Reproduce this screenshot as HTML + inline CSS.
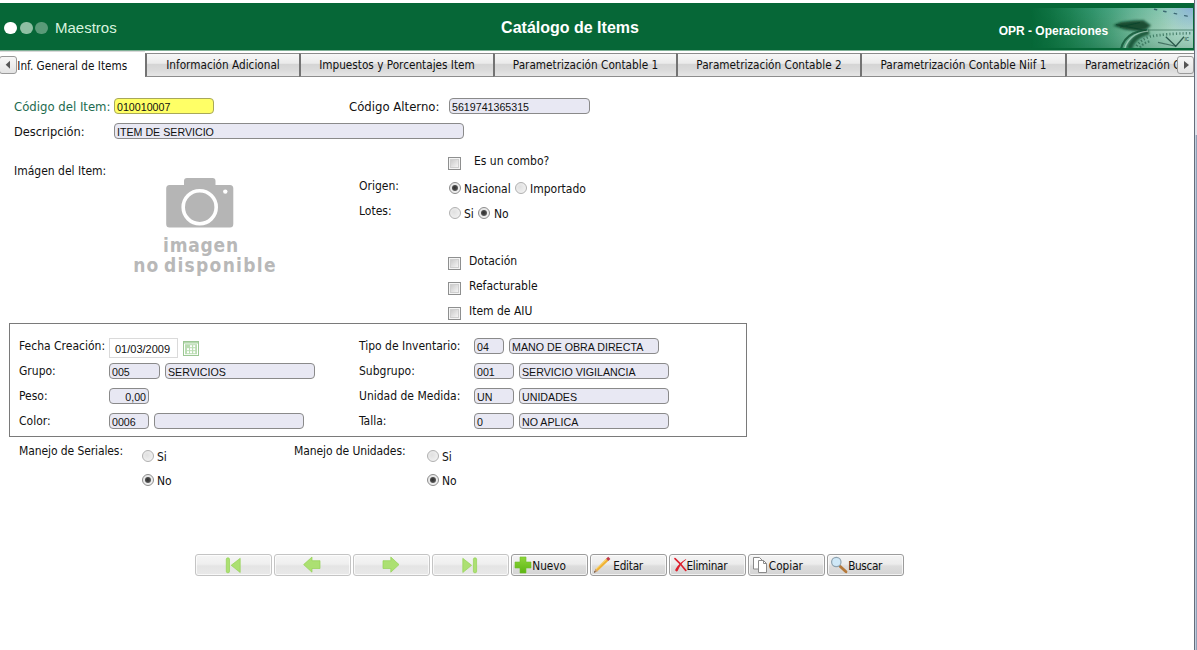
<!DOCTYPE html>
<html lang="es">
<head>
<meta charset="utf-8">
<title>Catálogo de Items</title>
<style>
html,body{margin:0;padding:0;background:#fff;}
body{width:1197px;height:650px;position:relative;overflow:hidden;font-stretch:condensed;font-family:"DejaVu Sans Condensed","DejaVu Sans","Liberation Sans",sans-serif;font-size:12px;color:#111;}
.abs{position:absolute;white-space:nowrap;}
#hdr{left:0;top:3px;width:1194px;height:47px;background:#066737;overflow:hidden;}
#hdr .ttl{left:0;width:1140px;top:16px;text-align:center;font:bold 16px "Liberation Sans",sans-serif;color:#fff;}
#hdr .mae{left:55px;top:16px;font:15px "Liberation Sans",sans-serif;color:#d8f3df;}
#hdr .opr{left:998.7px;top:21px;font:bold 12px "Liberation Sans",sans-serif;color:#fff;}
.dot{position:absolute;width:12.6px;height:12.6px;border-radius:50%;top:18.6px;}
.lbl{position:absolute;white-space:nowrap;font-size:12px;line-height:14px;color:#111;}
.in{position:absolute;box-sizing:border-box;height:16px;border:1px solid #8a8a8a;border-radius:4px;background:#e8e8f3;font:10.67px/16px "Liberation Sans",sans-serif;color:#111;padding:0 0 0 2px;white-space:nowrap;overflow:hidden;}
.cb{position:absolute;box-sizing:border-box;width:13px;height:13px;border:1px solid #8e8f8f;background:#f4f4f4;box-shadow:inset 0 0 0 1px #f4f4f4, inset 0 0 0 2px #cfcfcf;}
.cb:after{content:"";position:absolute;left:2px;top:2px;right:2px;bottom:2px;background:linear-gradient(135deg,#cbcbcb,#f4f4f4);}
.rd{position:absolute;box-sizing:border-box;width:12px;height:12px;border:1px solid #b0b0b0;border-radius:50%;background:radial-gradient(circle at 40% 40%,#e0e0e0 0,#ececec 55%,#f6f6f6 100%);}
.rd.on{border-color:#8c8c8c;}
.rd.on:after{content:"";position:absolute;left:2px;top:2px;width:6px;height:6px;border-radius:50%;background:radial-gradient(circle at 45% 45%,#2e2e2e 0,#4a4a4a 50%,#8a8a8a 100%);}
.tab{position:absolute;box-sizing:border-box;top:53px;height:24px;border:1px solid #8c8c8c;border-left:2px solid #737373;border-right:none;background:linear-gradient(#f7f7f7 0,#ebebeb 42%,#d5d5d5 47%,#dbdbdb 75%,#e6e6e6 100%);font:11.7px/23px "DejaVu Sans Condensed","DejaVu Sans","Liberation Sans",sans-serif;color:#111;text-align:center;white-space:nowrap;overflow:hidden;}
.btn{position:absolute;box-sizing:border-box;top:554px;width:77px;height:22px;border:1px solid #9c9c9c;border-radius:3px;background:linear-gradient(#f4f4f4 0,#ececec 45%,#dddddd 55%,#d4d4d4 100%);box-shadow:inset 0 0 0 1px rgba(255,255,255,.7);font:11.7px/22px "DejaVu Sans Condensed","DejaVu Sans","Liberation Sans",sans-serif;color:#111;white-space:nowrap;overflow:hidden;}
.sc{width:17px;height:18px;box-sizing:border-box;border:1px solid #9a9a9a;border-radius:3px;background:linear-gradient(#f7f7f7,#e3e3e3);}
.sc svg{position:absolute;left:-1px;top:-1px}
.noimg{text-align:center;font:bold 19px/22px "DejaVu Sans Condensed","DejaVu Sans",sans-serif;letter-spacing:0.8px;word-spacing:3px;color:#b8b8b8;}
.btn svg{position:absolute;left:-1px;top:-1px;}
.btn.dis{border-color:#c4c4c4;background:linear-gradient(#f5f5f5 0,#efefef 45%,#e4e4e4 55%,#e9e9e9 100%);}
</style>
</head>
<body>
<!-- header -->
<div id="hdr" class="abs">
  <div class="dot" style="left:4px;background:#fff"></div>
  <div class="dot" style="left:20px;background:#8fbfa3"></div>
  <div class="dot" style="left:35px;background:#5a9a78"></div>
<svg class="abs" style="left:1030px;top:5px" width="164" height="40" viewBox="1030 8 164 40">
    <defs>
      <linearGradient id="hg" x1="1030" y1="0" x2="1194" y2="0" gradientUnits="userSpaceOnUse">
        <stop offset="0" stop-color="#066737"/>
        <stop offset="0.12" stop-color="#0c6f3e"/>
        <stop offset="0.25" stop-color="#1a7d4d"/>
        <stop offset="0.38" stop-color="#2e8d62"/>
        <stop offset="0.50" stop-color="#4a9f79"/>
        <stop offset="0.62" stop-color="#6db394"/>
        <stop offset="0.75" stop-color="#8dc5ac"/>
        <stop offset="0.88" stop-color="#a9d5c2"/>
        <stop offset="1" stop-color="#b2dacb"/>
      </linearGradient>
      <linearGradient id="hv" x1="0" y1="8" x2="0" y2="48" gradientUnits="userSpaceOnUse">
        <stop offset="0" stop-color="#3fb39a" stop-opacity="0.22"/>
        <stop offset="0.5" stop-color="#3fb39a" stop-opacity="0"/>
        <stop offset="1" stop-color="#064d2a" stop-opacity="0.18"/>
      </linearGradient>
      <radialGradient id="hb" cx="1192" cy="6" r="34" gradientUnits="userSpaceOnUse">
        <stop offset="0" stop-color="#86a9dc" stop-opacity="0.85"/>
        <stop offset="0.5" stop-color="#8fb8d8" stop-opacity="0.45"/>
        <stop offset="1" stop-color="#9cc8d0" stop-opacity="0"/>
      </radialGradient>
      <linearGradient id="hmg" x1="1030" y1="0" x2="1194" y2="0" gradientUnits="userSpaceOnUse"><stop offset="0" stop-color="#000"/><stop offset="0.45" stop-color="#fff"/><stop offset="1" stop-color="#fff"/></linearGradient>
      <mask id="hm" maskUnits="userSpaceOnUse" x="1030" y="8" width="164" height="40"><rect x="1030" y="8" width="164" height="40" fill="url(#hmg)"/></mask>
      <filter id="bl" x="-10%" y="-10%" width="120%" height="120%"><feGaussianBlur stdDeviation="0.6"/></filter>
      <filter id="bl2" x="-10%" y="-10%" width="120%" height="120%"><feGaussianBlur stdDeviation="0.9"/></filter>
    </defs>
    <rect x="1030" y="8" width="163" height="40" fill="url(#hg)"/>
    <rect x="1030" y="8" width="163" height="40" fill="url(#hv)" mask="url(#hm)"/>
    <rect x="1130" y="8" width="63" height="40" fill="url(#hb)"/>
    <g filter="url(#bl2)">
      <path d="M1113 25.5 L1121 22 L1134 20.6 L1143.6 20.3 L1151 25.6 L1146 29.5 L1138 31.2 L1125 29.4 Z" fill="#083f27" fill-opacity="0.88"/>
      <path d="M1129.3 49 Q1131.5 40.5 1139 36 Q1143 33.5 1149 32" fill="none" stroke="#0a4c2e" stroke-opacity="0.85" stroke-width="5.2"/>
    </g>
    <g filter="url(#bl)" fill="none">
      <path d="M1121 49 Q1123.5 38.5 1133 33.5 Q1139 30.6 1147 30.2" stroke="#0c5132" stroke-opacity="0.8" stroke-width="2"/>
      <path d="M1124.6 49 Q1127 40 1135 35 Q1140 32 1148 31.2" stroke="#cfe9dd" stroke-opacity="0.55" stroke-width="1.3"/>
      <path d="M1148 30 H1193" stroke="#1c5a44" stroke-opacity="0.6" stroke-width="1.1"/>
      <path d="M1136.5 46 Q1141 39.5 1150 36.6 Q1165 33.6 1192 33.2" stroke="#17523c" stroke-opacity="0.6" stroke-width="2.6" stroke-dasharray="1.2 2.1"/>
      <path d="M1140 47.5 Q1143 43 1150 41.2" stroke="#17523c" stroke-opacity="0.55" stroke-width="2.2" stroke-dasharray="1.5 1.8"/>
      <path d="M1165.8 36.8 L1175.8 46.2 L1184 36.8" stroke="#123f33" stroke-opacity="0.8" stroke-width="1.3"/>
      <path d="M1158 42.4 L1175.8 46.2" stroke="#123f33" stroke-opacity="0.6" stroke-width="1.1"/>
      <path d="M1154.5 9.2 l2.2 .5 M1163.6 11.2 l2.4 .5 M1174.2 13.4 l2.4 .5 M1184.6 15.6 l2.6 .5" stroke="#1f4a5a" stroke-opacity="0.75" stroke-width="1.4" stroke-linecap="round"/>
      <path d="M1116 24.5 L1146 30.5 M1120 27 L1140 22.5" stroke="#0a3f28" stroke-opacity="0.6" stroke-width="1.2"/>
    </g>
    <text x="1184.6" y="40.6" font-family="Liberation Sans, sans-serif" font-size="4.6" font-weight="bold" fill="#1a4a3c" fill-opacity="0.75">IC</text>
  </svg>
  <div class="abs mae">Maestros</div>
  <div class="abs ttl">Catálogo de Items</div>
  <div class="abs opr">OPR - Operaciones</div>
</div>

<div class="abs" style="left:0;top:50px;width:1194px;height:1px;background:#7fb096"></div>
<!-- tabs -->
<div class="abs" style="left:0;top:76px;width:1194px;height:1px;background:#8c8c8c"></div>
<div class="abs" id="tab0" style="left:0;top:51px;width:145px;height:27px;background:#fff;border-top:1px solid #d9d9d9;box-sizing:border-box;font:11.7px/24px 'DejaVu Sans Condensed','DejaVu Sans','Liberation Sans',sans-serif;"><span class="abs" style="left:17.3px;top:2px">Inf. General de Items</span></div>
<div class="tab" style="left:145px;width:154px">Información Adicional</div>
<div class="tab" style="left:299px;width:194px">Impuestos y Porcentajes Item</div>
<div class="tab" style="left:493px;width:183px">Parametrización Contable 1</div>
<div class="tab" style="left:676px;width:184px">Parametrización Contable 2</div>
<div class="tab" style="left:860px;width:205px">Parametrización Contable Niif 1</div>
<div class="tab" style="left:1065px;width:129px;text-align:left;padding-left:18px">Parametrización Contable Niif 2</div>
<div class="abs sc" style="left:-1px;top:56px;width:18px"><svg width="18" height="18" viewBox="-1 0 18 18"><path d="M5.7 8.8 L10 4.8 L10 12.8 Z" fill="#555"/></svg></div>
<div class="abs sc" style="left:1177px;top:56px"><svg width="17" height="18" viewBox="0 0 17 18"><path d="M12 9 L7 5 L7 13 Z" fill="#555"/></svg></div>

<!-- form top -->
<div class="lbl" style="left:14px;top:100px;font-size:13px;color:#1d6b4f">Código del Item:</div>
<div class="in" style="left:114px;top:98px;width:100px;background:#ffff66;border-color:#a8a85a">010010007</div>
<div class="lbl" style="left:349px;top:100px;font-size:13px">Código Alterno:</div>
<div class="in" style="left:449px;top:98px;width:141px">5619741365315</div>
<div class="lbl" style="left:14px;top:125px;font-size:12.7px">Descripción:</div>
<div class="in" style="left:114px;top:123px;width:350px">ITEM DE SERVICIO</div>
<div class="lbl" style="left:14px;top:164px">Imágen del Item:</div>

<div class="cb" style="left:448px;top:157px"></div>
<div class="lbl" style="left:474px;top:154px">Es un combo?</div>
<div class="lbl" style="left:359px;top:179px">Origen:</div>
<div class="rd on" style="left:449px;top:182px"></div>
<div class="lbl" style="left:464px;top:182px">Nacional</div>
<div class="rd" style="left:515px;top:182px"></div>
<div class="lbl" style="left:530px;top:182px">Importado</div>
<div class="lbl" style="left:359px;top:204px">Lotes:</div>
<div class="rd" style="left:449px;top:207px"></div>
<div class="lbl" style="left:464px;top:207px">Si</div>
<div class="rd on" style="left:478px;top:207px"></div>
<div class="lbl" style="left:494px;top:207px">No</div>

<div class="cb" style="left:448px;top:257px"></div>
<div class="lbl" style="left:469px;top:254px">Dotación</div>
<div class="cb" style="left:448px;top:282px"></div>
<div class="lbl" style="left:469px;top:279px">Refacturable</div>
<div class="cb" style="left:448px;top:307px"></div>
<div class="lbl" style="left:469px;top:304px">Item de AIU</div>


<!-- image placeholder -->
<svg class="abs" style="left:160px;top:174px" width="80" height="58" viewBox="160 174 80 58">
  <path d="M169.5 185 H184 V181 Q184 178 187 178 H212.5 Q215.5 178 215.5 181 V185 H230 Q233.3 185 233.3 188.5 V224 Q233.3 227.5 230 227.5 H169.5 Q166.2 227.5 166.2 224 V188.5 Q166.2 185 169.5 185 Z" fill="#b5b5b5"/>
  <circle cx="199.7" cy="207.2" r="16.5" fill="none" stroke="#fff" stroke-width="3.6"/>
  <circle cx="225.3" cy="191.6" r="2.2" fill="#fff"/>
</svg>
<div class="abs noimg" style="left:127px;top:234px;width:148px;">imagen</div>
<div class="abs noimg" style="left:131px;top:254px;width:148px;letter-spacing:1.3px;word-spacing:-3px">no disponible</div>
<!-- boxed section -->
<div class="abs" style="left:9px;top:323px;width:738px;height:114px;box-sizing:border-box;border:1px solid #7a7a7a"></div>
<div class="lbl" style="left:19px;top:339px">Fecha Creación:</div>
<div class="abs" style="left:109px;top:338px;width:69px;height:19.5px;box-sizing:border-box;border:1px solid #dadada;background:#fff;font:11px/20px 'Liberation Sans',sans-serif;padding-left:5px">01/03/2009</div>
<svg class="abs" style="left:183px;top:341px" width="16" height="15" viewBox="0 0 16 15"><rect x="0.5" y="0.5" width="15" height="14" fill="#fff" stroke="#9cc794"/><rect x="1" y="1" width="14" height="1.6" fill="#b4d8ad"/><rect x="2" y="3.2" width="12" height="10" fill="#b9dcb1"/><g fill="#fff"><rect x="7" y="4.2" width="2" height="2"/><rect x="10.2" y="4.2" width="2" height="2"/><rect x="4" y="7.2" width="2" height="2"/><rect x="7" y="7.2" width="2" height="2"/><rect x="10.2" y="7.2" width="2" height="2"/><rect x="4" y="10.2" width="2" height="2"/><rect x="7" y="10.2" width="2" height="2"/><rect x="10.2" y="10.2" width="2" height="2"/></g></svg>
<div class="lbl" style="left:19px;top:364px">Grupo:</div>
<div class="in" style="left:109px;top:363px;width:51px">005</div>
<div class="in" style="left:165px;top:363px;width:150px">SERVICIOS</div>
<div class="lbl" style="left:19px;top:389px">Peso:</div>
<div class="in" style="left:109px;top:388px;width:40px;text-align:right;padding-right:2px">0,00</div>
<div class="lbl" style="left:19px;top:414px">Color:</div>
<div class="in" style="left:109px;top:413px;width:40px">0006</div>
<div class="in" style="left:154px;top:413px;width:150px"></div>

<div class="lbl" style="left:359px;top:339px">Tipo de Inventario:</div>
<div class="in" style="left:474px;top:338px;width:30px">04</div>
<div class="in" style="left:509px;top:338px;width:150px">MANO DE OBRA DIRECTA</div>
<div class="lbl" style="left:359px;top:364px">Subgrupo:</div>
<div class="in" style="left:474px;top:363px;width:40px">001</div>
<div class="in" style="left:519px;top:363px;width:150px">SERVICIO VIGILANCIA</div>
<div class="lbl" style="left:359px;top:389px">Unidad de Medida:</div>
<div class="in" style="left:474px;top:388px;width:40px">UN</div>
<div class="in" style="left:519px;top:388px;width:150px">UNIDADES</div>
<div class="lbl" style="left:359px;top:414px">Talla:</div>
<div class="in" style="left:474px;top:413px;width:40px">0</div>
<div class="in" style="left:519px;top:413px;width:150px">NO APLICA</div>

<!-- below box -->
<div class="lbl" style="left:19px;top:444px;letter-spacing:-0.1px">Manejo de Seriales:</div>
<div class="rd" style="left:142px;top:450px"></div>
<div class="lbl" style="left:157px;top:450px">Si</div>
<div class="rd on" style="left:142px;top:474px"></div>
<div class="lbl" style="left:157px;top:474px">No</div>
<div class="lbl" style="left:294px;top:444px;letter-spacing:-0.1px">Manejo de Unidades:</div>
<div class="rd" style="left:427px;top:450px"></div>
<div class="lbl" style="left:442px;top:450px">Si</div>
<div class="rd on" style="left:427px;top:474px"></div>
<div class="lbl" style="left:442px;top:474px">No</div>

<!-- buttons -->
<div class="btn dis" style="left:195px"><svg width="77" height="22" viewBox="195 554 77 22"><rect x="226.3" y="557.8" width="3.2" height="15" rx="1.5" fill="#ace072" stroke="#94d254" stroke-width="0.7" stroke-linejoin="round"/><path d="M231.2 565.3 L240.2 558.3 V572.5 Z" fill="#ace072" stroke="#94d254" stroke-width="0.7" stroke-linejoin="round"/></svg></div>
<div class="btn dis" style="left:274px"><svg width="77" height="22" viewBox="274 554 77 22"><path d="M303.6 564.6 L312 557 V560.7 H320 V568.5 H312 V572.2 Z" fill="#ace072" stroke="#94d254" stroke-width="0.7" stroke-linejoin="round"/></svg></div>
<div class="btn dis" style="left:353px"><svg width="77" height="22" viewBox="353 554 77 22"><path d="M399 564.6 L390.8 557 V560.7 H383 V568.5 H390.8 V572.2 Z" fill="#ace072" stroke="#94d254" stroke-width="0.7" stroke-linejoin="round"/></svg></div>
<div class="btn dis" style="left:432px"><svg width="77" height="22" viewBox="432 554 77 22"><path d="M471.6 565.3 L462.8 558.3 V572.5 Z" fill="#ace072" stroke="#94d254" stroke-width="0.7" stroke-linejoin="round"/><rect x="473.4" y="557.8" width="3.2" height="15" rx="1.5" fill="#ace072" stroke="#94d254" stroke-width="0.7" stroke-linejoin="round"/></svg></div>
<div class="btn" style="left:511px"><svg width="77" height="22" viewBox="511 554 77 22"><defs><linearGradient id="gp" x1="0" y1="0" x2="0" y2="1"><stop offset="0" stop-color="#8ed63a"/><stop offset="1" stop-color="#5cb512"/></linearGradient></defs><path d="M520 557 H526 V562 H531 V568 H526 V573 H520 V568 H515 V562 H520 Z" fill="url(#gp)" stroke="#6fbf2a" stroke-width="0.6"/></svg><span class="abs" style="left:20.3px;top:0">Nuevo</span></div>
<div class="btn" style="left:590px"><svg width="77" height="22" viewBox="590 554 77 22"><path d="M596.6 570 L607.4 559.6" stroke="#f0b234" stroke-width="3.1" fill="none"/><path d="M596 569.2 L606.8 558.9" stroke="#fbe28e" stroke-width="1" fill="none"/><path d="M607.2 559.8 L609.3 557.8" stroke="#bf3a4b" stroke-width="3.1" fill="none"/><path d="M593.9 572.7 L595.4 568.8 L597.8 571.2 Z" fill="#c99a6c"/><path d="M593.9 572.7 L594.6 570.9 L595.8 572 Z" fill="#4a3a30"/></svg><span class="abs" style="left:22.3px;top:0;letter-spacing:-0.25px">Editar</span></div>
<div class="btn" style="left:669px"><svg width="77" height="22" viewBox="669 554 77 22"><path d="M675 558.6 Q680.5 563.5 685.8 570.4" stroke="#dc1f2d" stroke-width="1.7" fill="none" stroke-linecap="round"/><path d="M686.4 559.6 Q680.6 563.6 677.6 571 Q676.6 572 675.4 570.8 Q675 570 675.6 569 Q679.4 562.6 685.6 559.2 Z" fill="#dc1f2d"/></svg><span class="abs" style="left:16.5px;top:0;letter-spacing:-0.3px">Eliminar</span></div>
<div class="btn" style="left:748px"><svg width="77" height="22" viewBox="748 554 77 22"><path d="M753.5 557.5 H759.5 L762.5 560.5 V569 H753.5 Z" fill="#fff" stroke="#8a8a8a"/><path d="M758.5 560.5 H763.5 L766.5 563.5 V572.5 H758.5 Z" fill="#fff" stroke="#8a8a8a"/><path d="M763.5 560.5 V563.5 H766.5" fill="none" stroke="#8a8a8a"/></svg><span class="abs" style="left:19.8px;top:0">Copiar</span></div>
<div class="btn" style="left:827px"><svg width="77" height="22" viewBox="827 554 77 22"><path d="M840 566.2 L846 571.8" stroke="#b5793a" stroke-width="2.8" stroke-linecap="round"/><circle cx="836.3" cy="562" r="4.7" fill="#cfe8f7" stroke="#8fa3b0" stroke-width="1.2"/></svg><span class="abs" style="left:20.2px;top:0;letter-spacing:-0.35px">Buscar</span></div>

<!-- right edge -->
<div class="abs" style="left:1194px;top:0;width:1px;height:650px;background:#666d7a"></div>
<div class="abs" style="left:1195px;top:0;width:2px;height:135px;background:#dfe4ed"></div>
<div class="abs" style="left:1195px;top:135px;width:1px;height:515px;background:#c0cede"></div>
<div class="abs" style="left:1196px;top:135px;width:1px;height:515px;background:#8fa0b7"></div>
</body>
</html>
